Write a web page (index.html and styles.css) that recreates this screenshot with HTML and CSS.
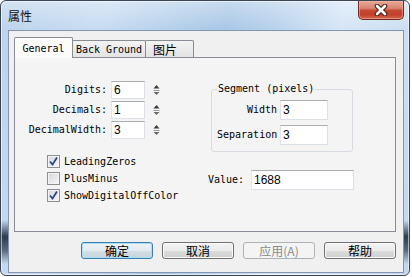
FILE: index.html
```html
<!DOCTYPE html>
<html lang="zh">
<head>
    <meta charset="UTF-8">
    <title>属性</title>
    <link rel="stylesheet" href="styles.css">
</head>
<body>
    <div class="window">
        <div class="titlebar">
            <span class="title">属性</span>
            <div class="close-btn">
                <svg width="16" height="12" viewBox="0 0 16 12">
                    <path d="M4 2 L12 10 M12 2 L4 10" stroke="#4a1c14" stroke-width="4.6" stroke-linecap="round"/>
                    <path d="M4 2 L12 10 M12 2 L4 10" stroke="#ffffff" stroke-width="2.6" stroke-linecap="round"/>
                </svg>
            </div>
        </div>
        <div class="client">
            <div class="tabs">
                <div class="tab active">General</div>
                <div class="tab back">Back Ground</div>
                <div class="tab pic">图片</div>
            </div>
            <div class="pane">
                <div class="col-left">
                    <div class="spin-row">
                        <span class="label">Digits:</span>
                        <div class="edit">6</div>
                        <svg class="spin" width="9" height="18" viewBox="0 0 9 18">
                            <path d="M4.5 4 L1.5 7.5 L7.5 7.5 Z" fill="#3c3c3c"/>
                            <path d="M1.5 9.5 H7.5" stroke="#9a9a9a" stroke-width="1"/>
                            <path d="M1.5 11 L7.5 11 L4.5 14 Z" fill="#6a6a6a"/>
                        </svg>
                    </div>
                    <div class="spin-row">
                        <span class="label">Decimals:</span>
                        <div class="edit">1</div>
                        <svg class="spin" width="9" height="18" viewBox="0 0 9 18">
                            <path d="M4.5 4 L1.5 7.5 L7.5 7.5 Z" fill="#3c3c3c"/>
                            <path d="M1.5 9.5 H7.5" stroke="#9a9a9a" stroke-width="1"/>
                            <path d="M1.5 11 L7.5 11 L4.5 14 Z" fill="#6a6a6a"/>
                        </svg>
                    </div>
                    <div class="spin-row">
                        <span class="label">DecimalWidth:</span>
                        <div class="edit">3</div>
                        <svg class="spin" width="9" height="18" viewBox="0 0 9 18">
                            <path d="M4.5 4 L1.5 7.5 L7.5 7.5 Z" fill="#3c3c3c"/>
                            <path d="M1.5 9.5 H7.5" stroke="#9a9a9a" stroke-width="1"/>
                            <path d="M1.5 11 L7.5 11 L4.5 14 Z" fill="#6a6a6a"/>
                        </svg>
                    </div>

                    <div class="checks">
                        <div class="check">
                            <span class="box">
                                <svg width="11" height="11" viewBox="0 0 11 11"><path d="M2 5.5 L4.5 8.5 L9 1.5" fill="none" stroke="#2d4487" stroke-width="1.8"/></svg>
                            </span>
                            LeadingZeros
                        </div>
                        <div class="check">
                            <span class="box"></span>
                            PlusMinus
                        </div>
                        <div class="check">
                            <span class="box">
                                <svg width="11" height="11" viewBox="0 0 11 11"><path d="M2 5.5 L4.5 8.5 L9 1.5" fill="none" stroke="#2d4487" stroke-width="1.8"/></svg>
                            </span>
                            ShowDigitalOffColor
                        </div>
                    </div>
                </div>

                <div class="col-right">
                    <fieldset class="group">
                        <legend>Segment (pixels)</legend>
                        <div class="seg-row">
                            <span class="label">Width</span>
                            <div class="edit">3</div>
                        </div>
                        <div class="seg-row">
                            <span class="label">Separation</span>
                            <div class="edit">3</div>
                        </div>
                    </fieldset>
                    <div class="value-row">
                        <span class="label">Value:</span>
                        <div class="edit">1688</div>
                    </div>
                </div>
            </div>
            <div class="buttons">
                <div class="btn default">确定</div>
                <div class="btn">取消</div>
                <div class="btn disabled">应用(A)</div>
                <div class="btn">帮助</div>
            </div>
        </div>
    </div>
</body>
</html>
```

FILE: styles.css
```css
* {
    box-sizing: border-box;
}
body {
    margin: 0;
    background: #ffffff;
    font-family: "DejaVu Sans Mono", monospace;
    font-size: 10px;
    color: #000;
}
.window {
    width: 410px;
    height: 276px;
    border: 1px solid #3a4657;
    border-radius: 6px;
    overflow: hidden;
    display: flex;
    flex-direction: column;
    box-shadow: inset 0 0 0 1px rgba(255, 255, 255, 0.55);
    background:
        linear-gradient(to bottom, rgba(20, 32, 48, 0) 0%, rgba(20, 32, 48, 0) 80%, rgba(20, 32, 48, 0.85) 86%, rgba(20, 32, 48, 0.6) 91%, rgba(20, 32, 48, 0) 96%),
        linear-gradient(to bottom, rgba(255, 255, 255, 0.35), rgba(255, 255, 255, 0) 28px),
        linear-gradient(105deg, #bcd3eb 0%, #c8dcf1 22%, #a9c7e7 48%, #b8d1ec 58%, #d6e6f6 72%, #c1d7ee 100%);
}
.titlebar {
    height: 29px;
    display: flex;
    align-items: flex-start;
}
.title {
    font-family: "Noto Sans CJK SC", sans-serif;
    font-size: 12px;
    line-height: 14px;
    margin: 8px 0 0 7px;
    color: #111;
}
.close-btn {
    margin-left: auto;
    margin-right: 5px;
    width: 46px;
    height: 19px;
    border: 1px solid #6e2a20;
    border-top: none;
    border-radius: 0 0 5px 5px;
    display: flex;
    align-items: center;
    justify-content: center;
    box-shadow: inset 0 0 0 1px rgba(255, 190, 170, 0.5);
    background: linear-gradient(to bottom, #e6a796 0%, #d98672 40%, #c64a33 52%, #c23f28 75%, #d2694f 100%);
}
.client {
    margin: 0 5px 0 7px;
    width: 396px;
    height: 243px;
    border: 1px solid #8396ad;
    background: #f0f0f0;
    padding: 6px 7px 0 5px;
}
.tabs {
    height: 20px;
    display: flex;
    align-items: flex-end;
}
.tab {
    height: 17px;
    border: 1px solid #898c95;
    border-bottom: none;
    border-radius: 2px 2px 0 0;
    background: linear-gradient(to bottom, #f3f3f3, #e3e3e3);
    display: flex;
    align-items: center;
    justify-content: center;
    white-space: nowrap;
}
.tab.active {
    width: 59px;
    height: 21px;
    margin-bottom: -1px;
    position: relative;
    z-index: 1;
    background: #fcfcfc;
}
.tab.back {
    width: 74px;
    margin-left: -1px;
}
.tab.pic {
    width: 49px;
    margin-left: -1px;
    justify-content: flex-start;
    padding-left: 7px;
    font-family: "Noto Sans CJK SC", sans-serif;
    font-size: 12px;
}
.pane {
    width: 382px;
    height: 175px;
    border: 1px solid #898c95;
    background: #f4f4f4;
    display: flex;
}
.col-left {
    width: 193px;
    padding-top: 23px;
}
.spin-row {
    height: 20px;
    display: flex;
    align-items: flex-start;
}
.label {
    white-space: nowrap;
}
.spin-row .label {
    width: 92px;
    text-align: right;
    line-height: 18px;
}
.edit {
    border: 1px solid #dbdfe6;
    border-top-color: #abadb3;
    border-left-color: #e2e3ea;
    background: #ffffff;
    font-family: "Liberation Sans", sans-serif;
    font-size: 12px;
    padding-left: 2px;
    display: flex;
    align-items: center;
}
.spin-row .edit {
    margin-left: 4px;
    width: 34px;
    height: 18px;
}
.spin {
    margin-left: 7px;
}
.checks {
    margin-top: 12px;
    padding-left: 32px;
}
.check {
    height: 17px;
    display: flex;
    align-items: center;
    gap: 4px;
}
.box {
    width: 13px;
    height: 13px;
    border: 1px solid #8e8f8f;
    background: linear-gradient(135deg, #d3d6db, #f7f7f7);
    box-shadow: inset 0 0 0 1px #f4f4f4;
    display: flex;
    align-items: center;
    justify-content: center;
}
.col-right {
    padding-top: 25px;
}
.group {
    margin: 0 0 0 3px;
    width: 142px;
    min-width: 0;
    border: 1px solid #d5dbe0;
    border-radius: 3px;
    padding: 5px 0 6px 5px;
}
.group legend {
    padding: 0 1px;
    line-height: 12px;
}
.seg-row {
    height: 20px;
    display: flex;
    margin-bottom: 5px;
}
.seg-row:last-child {
    margin-bottom: 0;
}
.seg-row .label {
    width: 60px;
    text-align: right;
    line-height: 20px;
}
.seg-row .edit {
    margin-left: 3px;
    width: 48px;
    height: 20px;
}
.value-row {
    margin-top: 18px;
    height: 20px;
    display: flex;
}
.value-row .label {
    width: 43px;
    line-height: 20px;
}
.value-row .edit {
    width: 103px;
    height: 20px;
}
.buttons {
    margin-top: 10px;
    display: flex;
    justify-content: flex-end;
    gap: 9px;
}
.btn {
    width: 72px;
    height: 17px;
    border: 1px solid #707070;
    border-radius: 3px;
    font-family: "Noto Sans CJK SC", sans-serif;
    font-size: 12px;
    display: flex;
    align-items: center;
    justify-content: center;
    box-shadow: inset 0 0 0 1px #fafafa;
    background: linear-gradient(to bottom, #f2f2f2 0%, #ebebeb 50%, #dddddd 51%, #cfcfcf 100%);
}
.btn.default {
    border-color: #3c7fb1;
    box-shadow: inset 0 0 0 1px #a9def6;
    background: linear-gradient(to bottom, #eef3f6 0%, #e3ebf0 50%, #d3dee5 51%, #c9d6de 100%);
}
.btn.disabled {
    border-color: #adb2b5;
    background: #f4f4f4;
    color: #8a8a8a;
    box-shadow: none;
}
```
